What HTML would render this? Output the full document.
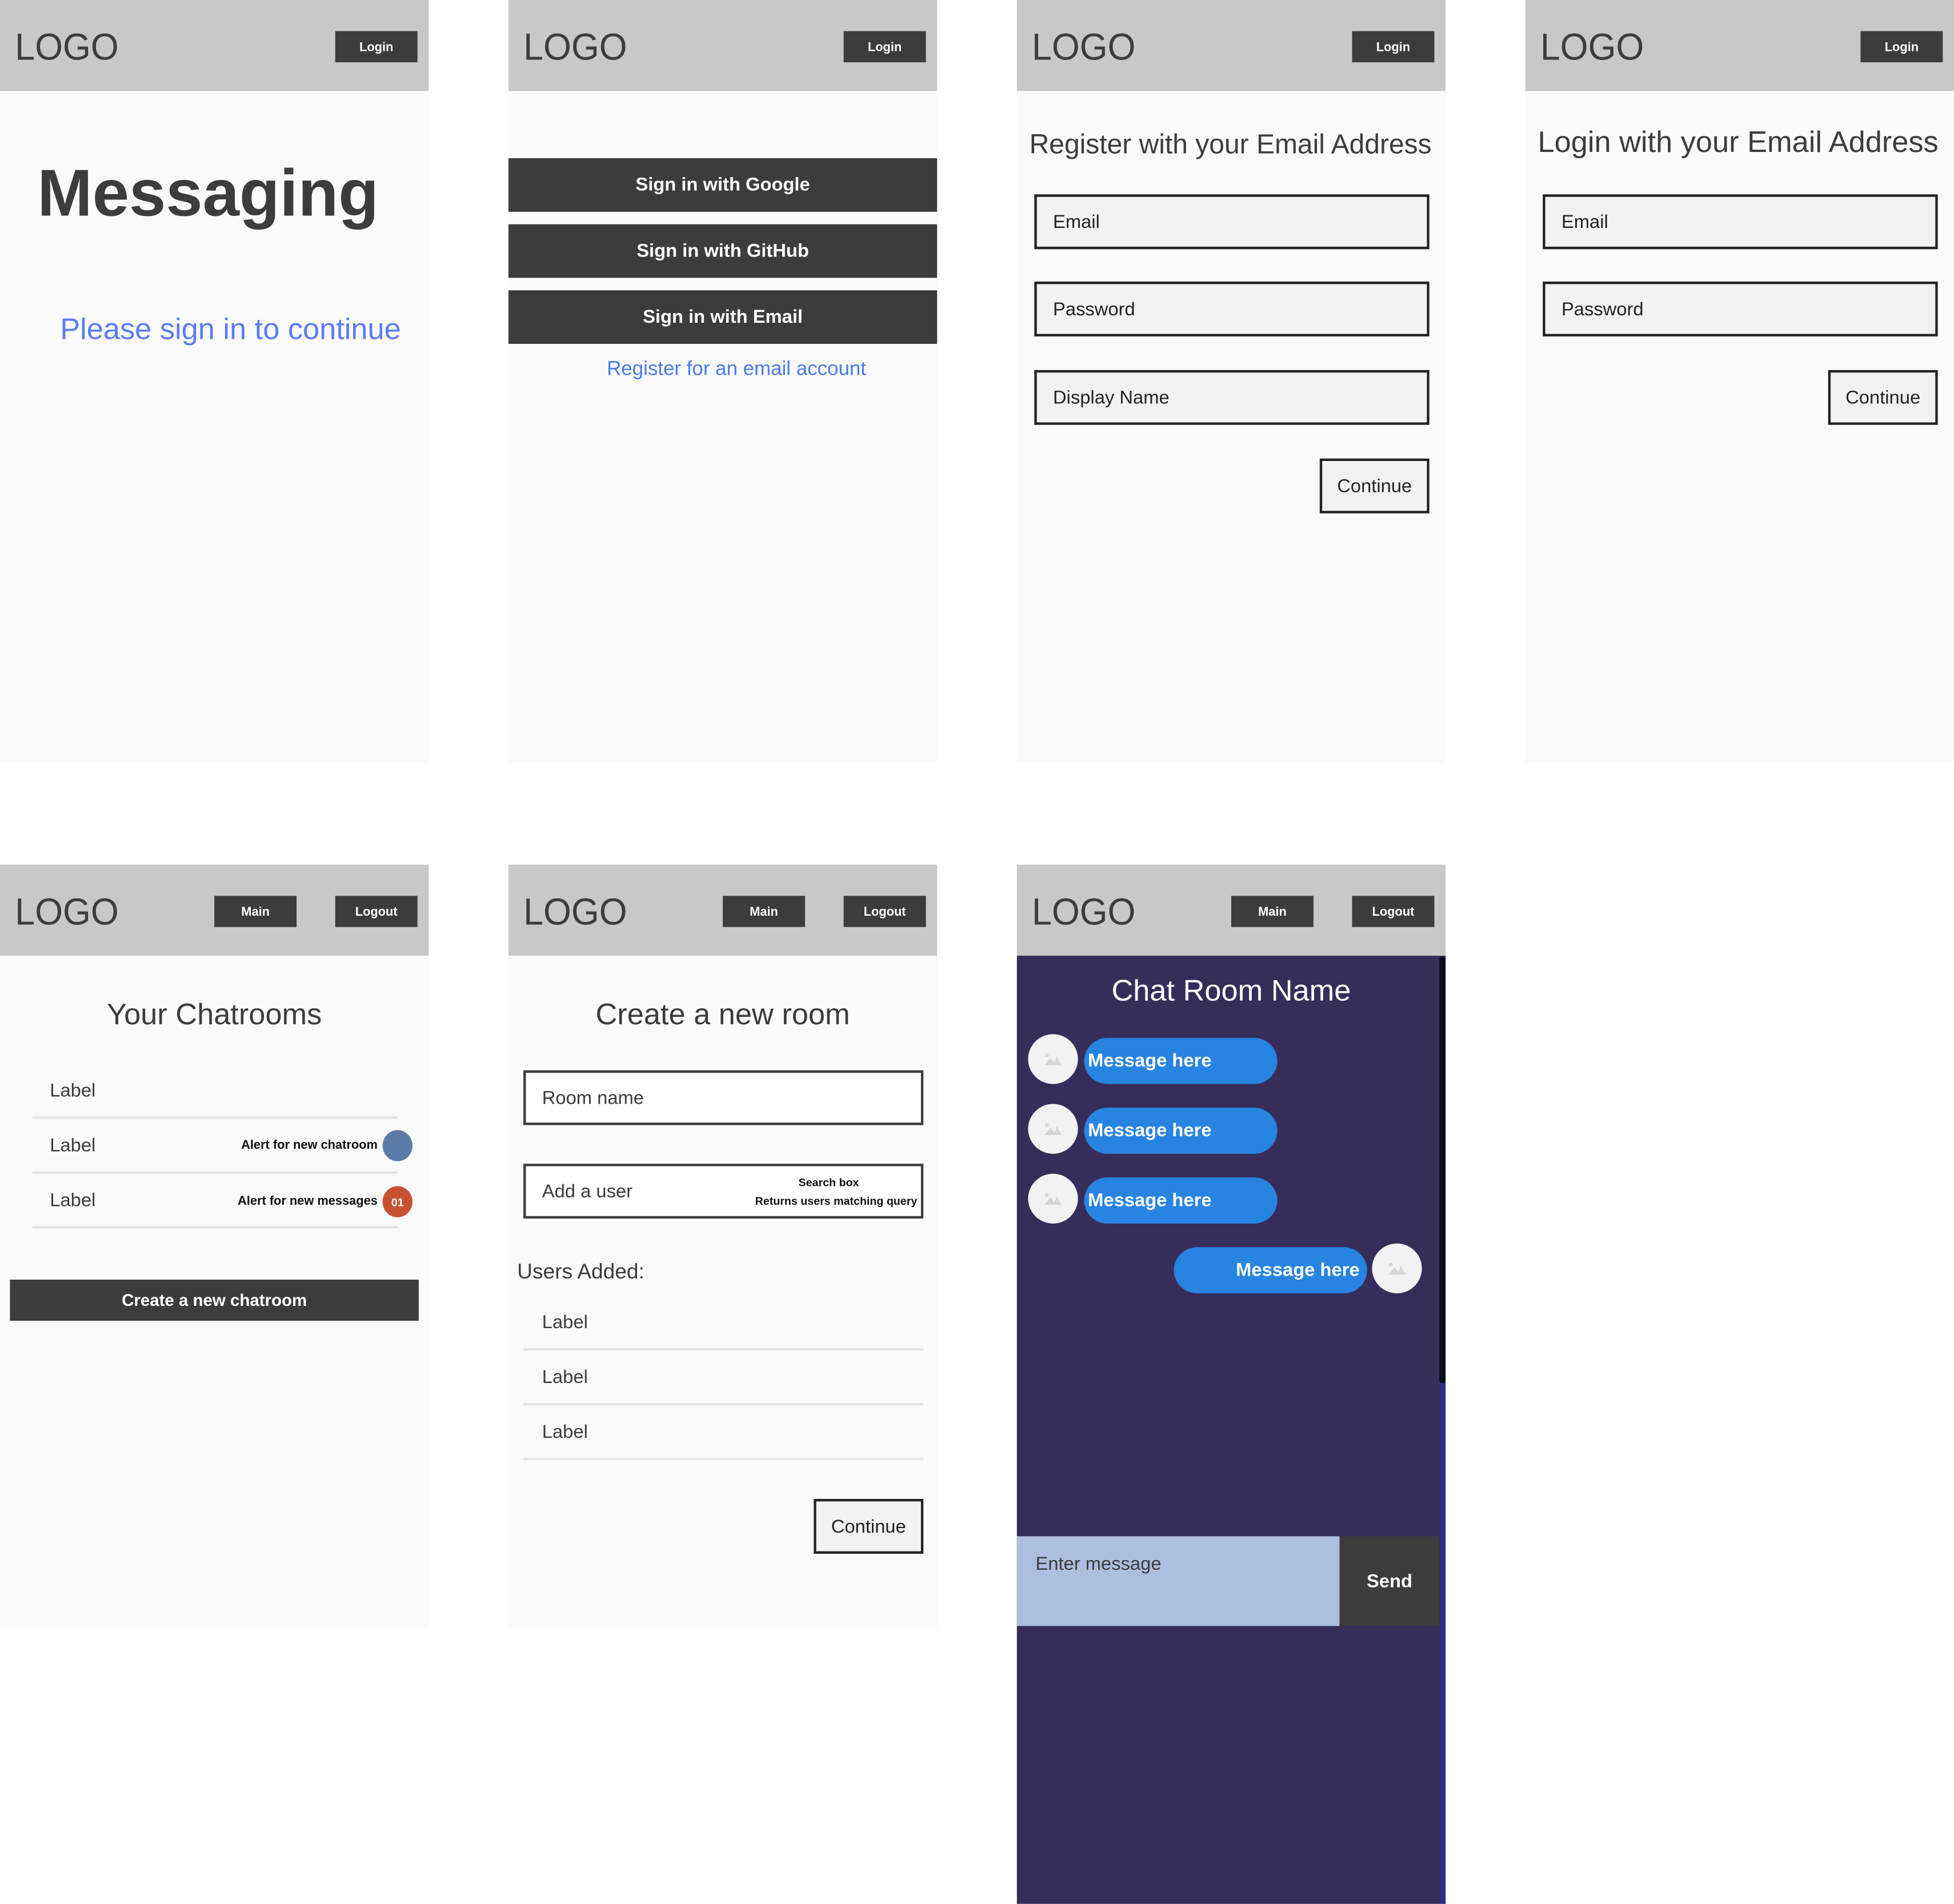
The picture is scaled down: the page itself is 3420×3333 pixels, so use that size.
<!DOCTYPE html>
<html><head><meta charset="utf-8">
<style>
html,body{margin:0;padding:0;background:#fff;width:3420px;height:3332px;overflow:hidden}
#w{position:absolute;left:0;top:0;width:1568px;height:1528px;transform:scale(2.18112);transform-origin:0 0;font-family:"Liberation Sans",sans-serif}
#w div{position:absolute;box-sizing:border-box}
.panel{background:#fafafa;width:344px}
.hdr{background:#c8c8c8;width:344px;height:73px}
.logo{font-size:30px;color:#3c3c3c;line-height:1;transform:scaleX(0.96);transform-origin:0 0}
.btn{background:#3c3c3c;color:#fff;font-size:10px;font-weight:bold;display:flex;align-items:center;justify-content:center;padding-top:2px}
.dbtn{background:#3c3c3c;color:#fff;font-size:15px;font-weight:bold;display:flex;align-items:center;justify-content:center}
.inp{border:2px solid #222;background:#f2f2f2;font-size:15px;color:#222;display:flex;align-items:center;padding-left:13px}
.cont{border:2px solid #222;background:#f2f2f2;font-size:15px;color:#222;display:flex;align-items:center;justify-content:center}
.t{white-space:nowrap;line-height:1}
.lbl{font-size:15px;color:#3c3c3c}
.div{height:2px;background:#e4e4e4}
.av{width:40px;height:40px;border-radius:50%;background:#f2f2f2;display:flex;align-items:center;justify-content:center}
.bub{background:#2784e0;border-radius:19px;color:#fff;font-size:15px;font-weight:bold;display:flex;align-items:center}
</style></head><body><div id="w">

<!-- Panel 1 -->
<div class="panel" style="left:0;top:0;height:612px"></div>
<div class="hdr" style="left:0;top:0"></div>
<div class="logo t" style="left:12px;top:24px">LOGO</div>
<div class="btn" style="left:269px;top:25px;width:66px;height:25px">Login</div>
<div class="t" style="left:30px;top:129px;font-size:53px;font-weight:bold;color:#3c3c3c">Messaging</div>
<div class="t" style="left:0;width:370px;top:253px;font-size:24px;color:#5b7cf5;text-align:center">Please sign in to continue</div>

<!-- Panel 2 -->
<div class="panel" style="left:408px;top:0;height:612px"></div>
<div class="hdr" style="left:408px;top:0"></div>
<div class="logo t" style="left:420px;top:24px">LOGO</div>
<div class="btn" style="left:677px;top:25px;width:66px;height:25px">Login</div>
<div class="dbtn" style="left:408px;top:127px;width:344px;height:43px">Sign in with Google</div>
<div class="dbtn" style="left:408px;top:180px;width:344px;height:43px">Sign in with GitHub</div>
<div class="dbtn" style="left:408px;top:233px;width:344px;height:43px">Sign in with Email</div>
<div class="t" style="left:408px;width:366px;top:289px;font-size:16px;color:#4a7be8;text-align:center">Register for an email account</div>

<!-- Panel 3 -->
<div class="panel" style="left:816px;top:0;height:612px"></div>
<div class="hdr" style="left:816px;top:0"></div>
<div class="logo t" style="left:828px;top:24px">LOGO</div>
<div class="btn" style="left:1085px;top:25px;width:66px;height:25px">Login</div>
<div class="t" style="left:826px;top:105px;font-size:22px;color:#3c3c3c">Register with your Email Address</div>
<div class="inp" style="left:830px;top:156px;width:317px;height:44px">Email</div>
<div class="inp" style="left:830px;top:226px;width:317px;height:44px">Password</div>
<div class="inp" style="left:830px;top:297px;width:317px;height:44px">Display Name</div>
<div class="cont" style="left:1059px;top:368px;width:88px;height:44px">Continue</div>

<!-- Panel 4 -->
<div class="panel" style="left:1224px;top:0;height:612px"></div>
<div class="hdr" style="left:1224px;top:0"></div>
<div class="logo t" style="left:1236px;top:24px">LOGO</div>
<div class="btn" style="left:1493px;top:25px;width:66px;height:25px">Login</div>
<div class="t" style="left:1234px;top:103px;font-size:24px;color:#3c3c3c">Login with your Email Address</div>
<div class="inp" style="left:1238px;top:156px;width:317px;height:44px">Email</div>
<div class="inp" style="left:1238px;top:226px;width:317px;height:44px">Password</div>
<div class="cont" style="left:1467px;top:297px;width:88px;height:44px">Continue</div>

<!-- Panel 5 -->
<div class="panel" style="left:0;top:694px;height:612px"></div>
<div class="hdr" style="left:0;top:694px"></div>
<div class="logo t" style="left:12px;top:718px">LOGO</div>
<div class="btn" style="left:172px;top:719px;width:66px;height:25px">Main</div>
<div class="btn" style="left:269px;top:719px;width:66px;height:25px">Logout</div>
<div class="t" style="left:0;width:344px;top:803px;font-size:24px;color:#3c3c3c;text-align:center">Your Chatrooms</div>
<div class="lbl t" style="left:40px;top:868px">Label</div>
<div class="div" style="left:26px;top:896px;width:293px"></div>
<div class="lbl t" style="left:40px;top:912px">Label</div>
<div class="t" style="left:150px;width:153px;text-align:right;top:915px;font-size:10px;font-weight:bold;color:#111">Alert for new chatroom</div>
<div style="left:307px;top:907px;width:24px;height:25px;border-radius:50%;background:#5b7ba9"></div>
<div class="div" style="left:26px;top:940px;width:293px"></div>
<div class="lbl t" style="left:40px;top:956px">Label</div>
<div class="t" style="left:150px;width:153px;text-align:right;top:960px;font-size:10px;font-weight:bold;color:#111">Alert for new messages</div>
<div style="left:307px;top:952px;width:24px;height:25px;border-radius:50%;background:#c85132;color:#fff;font-size:9px;font-weight:bold;display:flex;align-items:center;justify-content:center">01</div>
<div class="div" style="left:26px;top:984px;width:293px"></div>
<div class="dbtn" style="left:8px;top:1027px;width:328px;height:33px;font-size:13.5px">Create a new chatroom</div>

<!-- Panel 6 -->
<div class="panel" style="left:408px;top:694px;height:612px"></div>
<div class="hdr" style="left:408px;top:694px"></div>
<div class="logo t" style="left:420px;top:718px">LOGO</div>
<div class="btn" style="left:580px;top:719px;width:66px;height:25px">Main</div>
<div class="btn" style="left:677px;top:719px;width:66px;height:25px">Logout</div>
<div class="t" style="left:408px;width:344px;top:803px;font-size:24px;color:#3c3c3c;text-align:center">Create a new room</div>
<div class="inp" style="left:420px;top:859px;width:321px;height:44px;background:#fff;border-color:#3c3c3c;color:#3c3c3c">Room name</div>
<div class="inp" style="left:420px;top:934px;width:321px;height:44px;background:#fff;border-color:#3c3c3c;color:#3c3c3c">Add a user</div>
<div class="t" style="left:590px;width:150px;text-align:center;top:945px;font-size:9px;font-weight:bold;color:#111">Search box</div>
<div class="t" style="left:560px;width:176px;text-align:right;top:960px;font-size:9px;font-weight:bold;color:#111">Returns users matching query</div>
<div class="t" style="left:415px;top:1012px;font-size:17px;color:#3c3c3c">Users Added:</div>
<div class="lbl t" style="left:435px;top:1054px">Label</div>
<div class="div" style="left:420px;top:1082px;width:321px"></div>
<div class="lbl t" style="left:435px;top:1098px">Label</div>
<div class="div" style="left:420px;top:1126px;width:321px"></div>
<div class="lbl t" style="left:435px;top:1142px">Label</div>
<div class="div" style="left:420px;top:1170px;width:321px"></div>
<div class="cont" style="left:653px;top:1203px;width:88px;height:44px">Continue</div>

<!-- Panel 7 -->
<div style="left:816px;top:767px;width:344px;height:761px;background:#372d5a"></div>
<div style="left:1156px;top:1110px;width:4px;height:418px;background:#25308a"></div>
<div style="left:1155px;top:768px;width:5px;height:342px;background:#0a0c1c;border-radius:2px"></div>
<div class="hdr" style="left:816px;top:694px"></div>
<div class="logo t" style="left:828px;top:718px">LOGO</div>
<div class="btn" style="left:988px;top:719px;width:66px;height:25px">Main</div>
<div class="btn" style="left:1085px;top:719px;width:66px;height:25px">Logout</div>
<div class="t" style="left:816px;width:344px;top:784px;font-size:24px;color:#fff;text-align:center">Chat Room Name</div>

<div class="av" style="left:825px;top:830px"><svg width="16" height="12" viewBox="0 0 16 12"><circle cx="3" cy="3" r="1.6" fill="#d8d8d8"/><path d="M1 11 L6 5 L9 9 L11 4 L15 11Z" fill="#d6d6d6"/></svg></div>
<div class="bub" style="left:870px;top:833px;width:155px;height:37px;padding-left:3px">Message here</div>
<div class="av" style="left:825px;top:886px"><svg width="16" height="12" viewBox="0 0 16 12"><circle cx="3" cy="3" r="1.6" fill="#d8d8d8"/><path d="M1 11 L6 5 L9 9 L11 4 L15 11Z" fill="#d6d6d6"/></svg></div>
<div class="bub" style="left:870px;top:889px;width:155px;height:37px;padding-left:3px">Message here</div>
<div class="av" style="left:825px;top:942px"><svg width="16" height="12" viewBox="0 0 16 12"><circle cx="3" cy="3" r="1.6" fill="#d8d8d8"/><path d="M1 11 L6 5 L9 9 L11 4 L15 11Z" fill="#d6d6d6"/></svg></div>
<div class="bub" style="left:870px;top:945px;width:155px;height:37px;padding-left:3px">Message here</div>
<div class="bub" style="left:942px;top:1001px;width:155px;height:37px;justify-content:flex-end;padding-right:6px">Message here</div>
<div class="av" style="left:1101px;top:998px"><svg width="16" height="12" viewBox="0 0 16 12"><circle cx="3" cy="3" r="1.6" fill="#d8d8d8"/><path d="M1 11 L6 5 L9 9 L11 4 L15 11Z" fill="#d6d6d6"/></svg></div>

<div style="left:816px;top:1233px;width:259px;height:72px;background:#adbfdf"></div>
<div class="t" style="left:831px;top:1248px;font-size:15px;color:#3c3c3c">Enter message</div>
<div class="dbtn" style="left:1075px;top:1233px;width:80px;height:72px">Send</div>

</div></body></html>
